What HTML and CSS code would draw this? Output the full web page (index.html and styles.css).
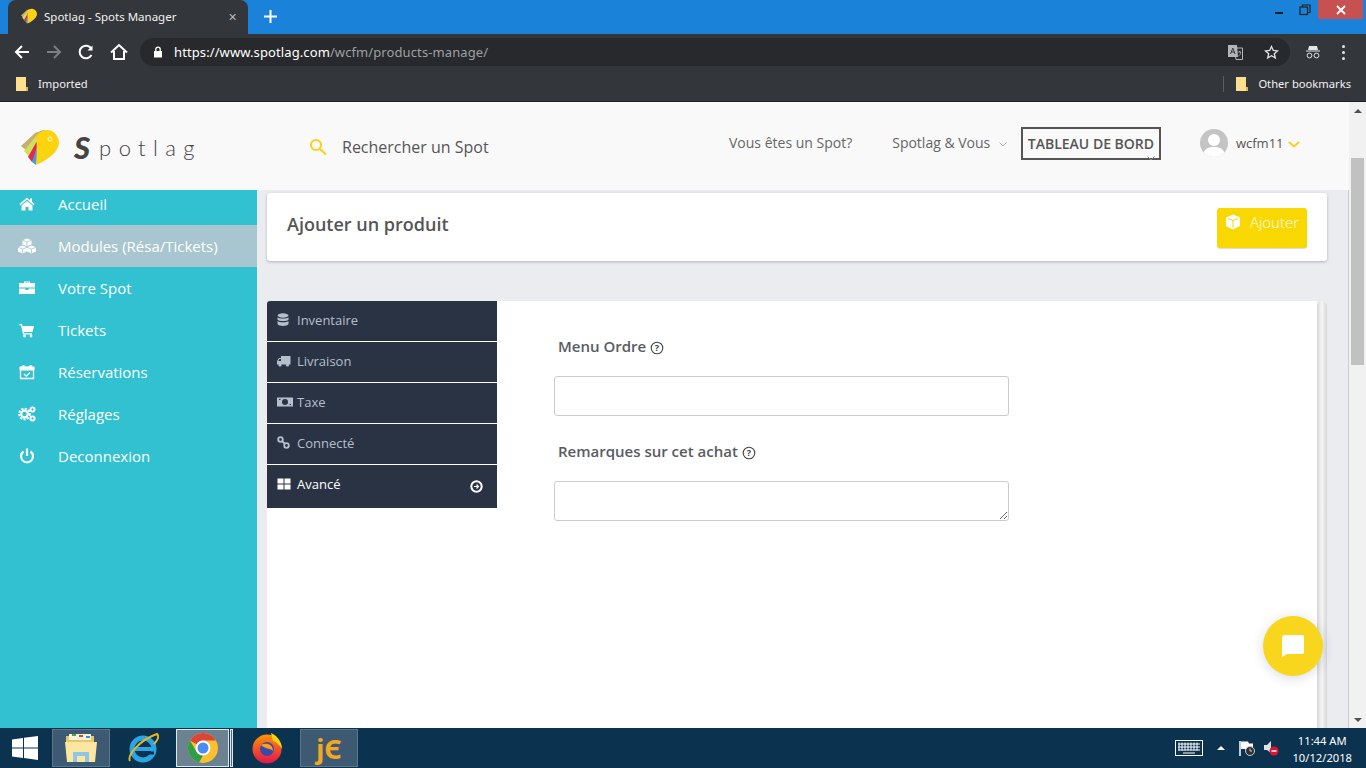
FILE: index.html
```html
<!DOCTYPE html>
<html lang="en">
<head>
  <meta charset="UTF-8">
  <meta name="viewport" content="width=device-width, initial-scale=1.0">
  <title>Spotlag - Spots Manager</title>
  <link rel="stylesheet" href="styles.css">
</head>
<body>
  <div class="browser">
    <div class="tabstrip">
      <div class="tab">
        <svg class="tab-icon" width="16" height="16" viewBox="0 0 38 36"><path d="M0 17 14 4 24 .5 16 10 6 22z" fill="#c9ad6f"/><path d="M3 22 15 7l1 13-8 8z" fill="#cfe05a"/><path d="M7 28 16 12v14l-5 7z" fill="#e8274f"/><path d="M11 33 16 18v12l-1 6z" fill="#3f9fe0"/><path d="M15 7c3-4 8-6.500 12-6 7 1 11 7 11 13 0 8-11 17-23 22 1-9 1-19 0-29z" fill="#fbd40f"/></svg>
        <span class="tab-title">Spotlag - Spots Manager</span>
        <span class="tab-close">✕</span>
      </div>
      <svg class="new-tab" width="13" height="13" viewBox="0 0 13 13"><path d="M6.500 0v13M0 6.500h13" stroke="#fff" stroke-width="2"/></svg>
      <div class="window-btns">
        <svg class="win-min" width="10" height="10" viewBox="0 0 10 10"><path d="M1 8h8" stroke="#222" stroke-width="2"/></svg>
        <svg class="win-restore" width="12" height="12" viewBox="0 0 12 12" fill="none" stroke="#222" stroke-width="1.200"><rect x="1" y="3" width="7.500" height="7.500"/><path d="M3.500 3V1H11v7.500H8.500"/></svg>
        <div class="win-close"><svg width="10" height="10" viewBox="0 0 10 10"><path d="M1 1l8 8M9 1 1 9" stroke="#fff" stroke-width="1.800"/></svg></div>
      </div>
    </div>
    <div class="toolbar">
      <svg class="nav-icon" width="16" height="16" viewBox="0 0 16 16" fill="none" stroke="#fff" stroke-width="2"><path d="M15 8H2M8 2 2 8l6 6"/></svg>
      <svg class="nav-icon" width="16" height="16" viewBox="0 0 16 16" fill="none" stroke="#7d8083" stroke-width="2"><path d="M1 8h13M8 2l6 6-6 6"/></svg>
      <svg class="nav-icon" width="16" height="16" viewBox="0 0 16 16" fill="none" stroke="#fff" stroke-width="2"><path d="M13.500 11a6.300 6.300 0 1 1 0-6"/><path d="M14.500 1.500v5h-5" fill="#fff" stroke="none"/></svg>
      <svg class="nav-icon nav-home" width="18" height="18" viewBox="0 0 18 18" fill="none" stroke="#fff" stroke-width="2"><path d="M1 9.500 9 2l8 7.500M4 8v8h10V8"/></svg>
      <div class="omnibox">
        <svg width="10" height="12" viewBox="0 0 10 12"><path d="M1 5h8v6.500H1z" fill="#fff"/><path d="M2.800 5V3.300a2.200 2.200 0 0 1 4.400 0V5" fill="none" stroke="#fff" stroke-width="1.300"/></svg>
        <span class="url"><span class="url-host">https://www.spotlag.com</span>/wcfm/products-manage/</span>
        <div class="omnibox-right">
          <svg width="15" height="15" viewBox="0 0 15 15"><path d="M6 3h8.500v11.500H8z" fill="none" stroke="#b3b5b7"/><path d="M0 0h9l1 12H0z" fill="#b3b5b7"/><path d="M2.500 9l2.300-6 2.300 6M3.500 7h2.600" fill="none" stroke="#33363a"/><path d="M10 7h3M11.500 6v1M10.500 11c1.500-1 2-2 2.300-4" fill="none" stroke="#b3b5b7" stroke-width=".8"/></svg>
          <svg width="15" height="15" viewBox="0 0 15 15"><path d="m7.500 1.500 1.800 4 4.200.4-3.200 2.800 1 4.300-3.800-2.300-3.800 2.300 1-4.300L1.500 5.900l4.200-.4z" fill="none" stroke="#e3e4e5" stroke-width="1.300"/></svg>
        </div>
      </div>
      <svg class="incognito" width="16" height="14" viewBox="0 0 16 14"><path d="M4 1h8l1 4H3zM1 5.500h14v1H1z" fill="#e3e4e5"/><circle cx="4.500" cy="10.500" r="2.400" fill="none" stroke="#e3e4e5"/><circle cx="11.500" cy="10.500" r="2.400" fill="none" stroke="#e3e4e5"/></svg>
      <div class="dots"><i></i><i></i><i></i></div>
    </div>
    <div class="bookmarks">
      <svg class="folder" width="12" height="14" viewBox="0 0 12 14"><path d="M0 0h10v10h2v4H0z" fill="#fce08f"/><path d="M10 10h2v4h-2z" fill="#e3b84a"/></svg>
      <span>Imported</span>
      <div class="bookmarks-right">
        <span class="bookmarks-sep"></span>
        <svg class="folder" width="12" height="14" viewBox="0 0 12 14"><path d="M0 0h10v10h2v4H0z" fill="#fce08f"/><path d="M10 10h2v4h-2z" fill="#e3b84a"/></svg>
        <span>Other bookmarks</span>
      </div>
    </div>
  </div>

  <div class="page">
    <div class="site">
      <header class="site-header">
        <div class="logo">
          <svg width="38" height="36" viewBox="0 0 38 36"><path d="M0 17 14 4 24 .5 16 10 6 22z" fill="#c9ad6f"/><path d="M3 22 15 7l1 13-8 8z" fill="#cfe05a"/><path d="M7 28 16 12v14l-5 7z" fill="#e8274f"/><path d="M11 33 16 18v12l-1 6z" fill="#3f9fe0"/><path d="M15 7c3-4 8-6.500 12-6 7 1 11 7 11 13 0 8-11 17-23 22 1-9 1-19 0-29z" fill="#fbd40f"/><circle cx="29" cy="10" r="2" fill="none" stroke="#fff" stroke-width=".8"/></svg>
          <span class="logo-s">S</span><span class="logo-rest">potlag</span>
        </div>
        <div class="search">
          <svg width="18" height="18" viewBox="0 0 18 18" fill="none" stroke="#fbd01e" stroke-width="2.200"><circle cx="7" cy="7" r="5"/><path d="m11 11 6 5.500"/></svg>
          <span>Rechercher un Spot</span>
        </div>
        <nav class="top-nav">
          <a class="nav-link">Vous êtes un Spot?</a>
          <a class="nav-link with-caret">Spotlag &amp; Vous <svg width="8" height="5" viewBox="0 0 8 5" fill="none" stroke="#b5b5b5"><path d="m.5.500 3.500 3.500L7.500.500"/></svg></a>
          <a class="board-link">TABLEAU DE BORD<svg class="board-caret" width="8" height="5" viewBox="0 0 8 5" fill="none" stroke="#888"><path d="m.5.500 3.500 3.500L7.500.500"/></svg></a>
        </nav>
        <div class="user">
          <div class="avatar"><svg width="28" height="28" viewBox="0 0 28 28"><circle cx="14" cy="11" r="6" fill="#fff"/><path d="M3 28c0-8 5-10 11-10s11 2 11 10z" fill="#fff"/></svg></div>
          <span>wcfm11</span>
          <svg width="12" height="7" viewBox="0 0 12 7" fill="none" stroke="#fbd01e" stroke-width="2"><path d="m1 1 5 4.500L11 1"/></svg>
        </div>
      </header>
      <div class="body-row">
        <aside class="sidebar">
          <ul class="side-menu">
            <li><svg class="side-icon" viewBox="0 0 18 16"><path d="M9 1.500 1.500 8l1 1.200L9 3.500l6.500 5.700 1-1.200-2.500-2.200V2.500h-2v2zM3.500 9.500 9 5l5.500 4.500v5h-4v-3.500h-3v3.500h-4z" fill="#fff"/></svg>Accueil</li>
            <li class="active"><svg class="side-icon" viewBox="0 0 18 16"><path d="m9 .5 4.500 1.700v4.300L9 8.300 4.500 6.500V2.200zM4.500 7.500 9 9.300v4.300l-4.500 1.900L0 13.600V9.300zM13.500 7.500 18 9.300v4.300l-4.500 1.900L9 13.600V9.300z" fill="#fff"/><path d="M4.500 2.200 9 4l4.500-1.800M9 4v4.300M0 9.300l4.500 1.800L9 9.300M4.500 11.100v4.400M9 9.300l4.500 1.800L18 9.300M13.500 11.100v4.400" fill="none" stroke="#a8c6d0" stroke-width=".8"/></svg>Modules (Résa/Tickets)</li>
            <li><svg class="side-icon" viewBox="0 0 18 16"><path d="M6 3V1.500h6V3h5v4.500H1V3zm1.200 0h3.600V2.500H7.200zM1 8.500h6.500V10h3V8.500H17V14H1z" fill="#fff"/></svg>Votre Spot</li>
            <li><svg class="side-icon" viewBox="0 0 18 16"><path d="M1 2h3l.6 2H16l-1.500 6H6l.3 1.200H14v1.300H5L3 3.300H1z" fill="#fff"/><circle cx="6.500" cy="14" r="1.400" fill="#fff"/><circle cx="13" cy="14" r="1.400" fill="#fff"/></svg>Tickets</li>
            <li><svg class="side-icon" viewBox="0 0 18 16" fill="none" stroke="#fff"><path d="M2.500 3.500h13v11h-13z" stroke-width="1.300"/><path d="M2 3h14v3H2z" fill="#fff"/><path d="M5.500 1v3M12.500 1v3" stroke-width="2"/><path d="m6 10 2.200 2.200L12 8.500" stroke-width="1.300"/></svg>Réservations</li>
            <li><svg class="side-icon" viewBox="0 0 18 16" fill="none" stroke="#fff"><circle cx="6.500" cy="8" r="5.300" stroke-width="2" stroke-dasharray="2.200 1.300"/><circle cx="6.500" cy="8" r="3.300" stroke-width="2.200"/><circle cx="14.500" cy="3.500" r="2.100" stroke-width="1.900"/><circle cx="14.500" cy="12.500" r="2.100" stroke-width="1.900"/></svg>Réglages</li>
            <li><svg class="side-icon" viewBox="0 0 18 16" fill="none" stroke="#fff" stroke-width="2.200"><path d="M5.500 3.500a6 6 0 1 0 7 0M9 .5v7.500"/></svg>Deconnexion</li>
          </ul>
        </aside>
        <main class="main">
          <section class="title-card">
            <h2>Ajouter un produit</h2>
            <button class="add-btn">
              <svg width="16" height="16" viewBox="0 0 16 16"><path d="M8 0.500 15 3.500v8.500L8 15.500 1 12V3.500z" fill="#fff"/><path d="m3 4.500 5 2 5-2M8 6.500v7" stroke="#f8d800" fill="none"/></svg>
              Ajouter
            </button>
          </section>
          <section class="editor">
            <div class="editor-body">
              <ul class="tabs">
                <li><svg class="tab-ic" viewBox="0 0 14 14" fill="#b4bfcb"><ellipse cx="6" cy="2.500" rx="5.500" ry="2.200"/><path d="M.5 4.300c1 1.700 10 1.700 11 0v2.400c-1 1.700-10 1.700-11 0zM.5 8c1 1.700 10 1.700 11 0v3c-1 2.500-10 2.500-11 0z"/></svg>Inventaire</li>
                <li><svg class="tab-ic" viewBox="0 0 14 14" fill="#b4bfcb"><path d="M4 2h9.500v8.500H0V7l2-3h2zM2.500 5 1.200 7H4V5z"/><circle cx="3" cy="11" r="1.600"/><circle cx="10.500" cy="11" r="1.600"/></svg>Livraison</li>
                <li><svg class="tab-ic tab-ic-wide" viewBox="0 0 16 14"><path d="M0 2.500h16v9H0z" fill="#b4bfcb"/><circle cx="8" cy="7" r="3" fill="#2a3344"/><path d="M2 4.500h1.500M12.500 9.500H14" stroke="#2a3344"/></svg>Taxe</li>
                <li><svg class="tab-ic" viewBox="0 0 14 14" fill="none" stroke="#b4bfcb" stroke-width="1.800"><circle cx="3.500" cy="3.500" r="2.300"/><circle cx="9.500" cy="9.500" r="2.300"/><path d="m5 5 3 3"/></svg>Connecté</li>
                <li class="current"><svg class="tab-ic" viewBox="0 0 14 14" fill="#fff"><path d="M.5 1.500h6v5h-6zM7.500 1.500h6v5h-6zM.5 7.500h6v5h-6zM7.500 7.500h6v5h-6z"/></svg>Avancé
                  <svg class="tab-arrow" width="13" height="13" viewBox="0 0 13 13"><circle cx="6.500" cy="6.500" r="5.200" fill="none" stroke="#fff" stroke-width="2"/><path d="M4 6.500h4.500M6.500 4.500l2 2-2 2" fill="none" stroke="#fff" stroke-width="1.200"/></svg>
                </li>
              </ul>
              <form class="fields">
                <div class="field">
                  <label>Menu Ordre <svg class="help" width="14" height="14" viewBox="0 0 14 14"><circle cx="7" cy="7" r="5.800" fill="none" stroke="#444" stroke-width="1.100"/><text x="7" y="10" text-anchor="middle" font-size="9" font-family="Open Sans" font-weight="700" fill="#444">?</text></svg></label>
                  <input type="text">
                </div>
                <div class="field">
                  <label>Remarques sur cet achat <svg class="help" width="14" height="14" viewBox="0 0 14 14"><circle cx="7" cy="7" r="5.800" fill="none" stroke="#444" stroke-width="1.100"/><text x="7" y="10" text-anchor="middle" font-size="9" font-family="Open Sans" font-weight="700" fill="#444">?</text></svg></label>
                  <textarea></textarea>
                </div>
              </form>
            </div>
            <div class="editor-rail"></div>
          </section>
          <div class="chat-bubble">
            <svg width="22" height="22" viewBox="0 0 22 22"><path d="M3 0h17a2 2 0 0 1 2 2v15a2 2 0 0 1-2 2H5l-5 3V3a3 3 0 0 1 3-3z" fill="#fff"/></svg>
          </div>
        </main>
      </div>
    </div>
    <div class="page-scrollbar">
      <span class="arrow-up"></span>
      <div class="thumb"></div>
      <span class="arrow-down"></span>
    </div>
  </div>

  <footer class="taskbar">
    <svg class="win-logo" width="26" height="26" viewBox="0 0 26 26" fill="#fff"><path d="M0 4.500 11 3v9.500H0zM12 2.800 26 1v11.500H12zM0 13.500h11V23L0 21.500zM12 13.500h14V25l-14-2z"/></svg>
    <div class="task-btn">
      <svg width="34" height="32" viewBox="0 0 34 32"><path d="M2 4h28v10H2z" fill="#e8c766"/><path d="M5 2h22v6H5z" fill="#f8f3dc"/><path d="M8 2h4v2H8z" fill="#3cab4a"/><path d="M15 3h4v2h-4z" fill="#d8443a"/><path d="M22 4h4v2h-4z" fill="#3a8fd8"/><path d="M1 10h32l-2 20H3z" fill="#fbe6a2"/><path d="M9 30V20h16v10h-4v-6h-8v6z" fill="#8fc6e8"/></svg>
    </div>
    <div class="task-plain task-ie">
      <svg width="32" height="32" viewBox="0 0 32 32"><circle cx="16" cy="17" r="11" fill="none" stroke="#2aa5e6" stroke-width="5"/><path d="M8 17h17" stroke="#2aa5e6" stroke-width="4"/><path d="M3 29C0 24 12 8 30 2c3 3-1 8-3 10" fill="none" stroke="#e8b520" stroke-width="2"/><path d="M27 21h-8" stroke="#0b3350" stroke-width="3"/></svg>
    </div>
    <div class="task-btn task-active">
      <svg width="30" height="30" viewBox="0 0 30 30"><circle cx="15" cy="15" r="15" fill="#fbc02d"/><path d="M15 0a15 15 0 0 1 13 7.500H15a7.500 7.500 0 0 0-6.500 3.750L2 7.500A15 15 0 0 1 15 0z" fill="#db4437"/><path d="M2 7.500l6.500 11.250A7.500 7.500 0 0 0 15 22.500l-4 7A15 15 0 0 1 2 7.500z" fill="#2e9e48"/><circle cx="15" cy="15" r="7.500" fill="#fff"/><circle cx="15" cy="15" r="5.500" fill="#4c8bf5"/></svg>
    </div>
    <span class="task-sliver"></span>
    <div class="task-plain task-ff">
      <svg width="32" height="32" viewBox="0 0 32 32"><defs><linearGradient id="ff" x1="0" y1="0" x2="0" y2="1"><stop offset="0" stop-color="#ff9500"/><stop offset="1" stop-color="#e3124f"/></linearGradient></defs><circle cx="16" cy="17" r="14.500" fill="url(#ff)"/><path d="M20 1c5 2 11 8 11 16-2-4-6-7-9-8z" fill="#fbd40f"/><circle cx="16" cy="17" r="7" fill="#3b4aa8"/><path d="M10 13c5-3 12-1 12 6-3-3-8-2-12-6z" fill="#ff9f1c"/></svg>
    </div>
    <div class="task-btn task-je"><span>jЄ</span></div>
    <div class="tray">
      <svg class="tray-kb" width="28" height="16" viewBox="0 0 28 16"><rect x=".5" y=".5" width="27" height="15" fill="#0b3350" stroke="#fff"/><path d="M3 4h22M3 7h22M3 10h22M4 2.500v8M7 2.500v8M10 2.500v8M13 2.500v8M16 2.500v8M19 2.500v8M22 2.500v8M8 13h12" stroke="#fff"/></svg>
      <span class="tray-caret"></span>
      <svg class="tray-flag" width="16" height="16" viewBox="0 0 16 16"><path d="M1 1v15" stroke="#fff" stroke-width="1.500"/><path d="M2 1.500h7l1 2h4v7H7l-1-1.500H2z" fill="#fff"/><circle cx="11" cy="11" r="4.500" fill="#333" stroke="#ccc"/><path d="M11 8.500V11h2" fill="none" stroke="#ccc"/></svg>
      <svg class="tray-sound" width="16" height="16" viewBox="0 0 16 16"><path d="M1 5h3l4-4v12L4 10H1z" fill="#dfe3e6"/><circle cx="11" cy="11" r="4.500" fill="#e2142d"/><path d="M8.500 11h5" stroke="#fff" stroke-width="1.500"/></svg>
      <div class="clock"><div>11:44 AM</div><div>10/12/2018</div></div>
    </div>
  </footer>
</body>
</html>
```

FILE: styles.css
```css
* {
  box-sizing: border-box;
}

body {
  margin: 0;
  height: 768px;
  overflow: hidden;
  display: flex;
  flex-direction: column;
  font-family: 'Open Sans', sans-serif;
  background-color: #ebecf0;
}

ul {
  list-style: none;
  margin: 0;
  padding: 0;
}

/* browser window */
.browser {
  flex: none;
  height: 102px;
  border-bottom: 1px solid #1f2124;
  background-color: #33363a;
  font-family: 'Noto Sans', sans-serif;
  color: #fff;
}

.tabstrip {
  height: 34px;
  display: flex;
  align-items: flex-end;
  background-color: #1a82d8;
  position: relative;
}

.tab {
  width: 240px;
  height: 34px;
  margin-left: 8px;
  padding: 0 7px 2px 13px;
  display: flex;
  align-items: center;
  background-color: #33363a;
  border-radius: 8px 8px 0 0;
  font-size: 11.5px;
}

.tab-icon {
  margin-right: 7px;
}

.tab-title {
  flex: 1;
  color: #f2f2f2;
}

.tab-close {
  font-size: 11px;
  color: #b5b7b9;
  margin-right: 4px;
}

.new-tab {
  margin: 0 0 11px 16px;
}

.window-btns {
  margin-left: auto;
  align-self: flex-start;
  height: 19px;
  display: flex;
  align-items: center;
  padding-right: 3px;
}

.win-min {
  margin-right: 15px;
}

.win-restore {
  margin-right: 7px;
}

.win-close {
  width: 45px;
  height: 19px;
  background-color: #c75050;
  display: flex;
  align-items: center;
  justify-content: center;
}

.toolbar {
  height: 32px;
  margin-top: 2px;
  padding-left: 14px;
  display: flex;
  align-items: center;
}

.nav-icon {
  margin-right: 16px;
}

.nav-home {
  margin-right: 12px;
}

.omnibox {
  width: 1150px;
  height: 28px;
  padding: 0 0 0 13px;
  display: flex;
  align-items: center;
  background-color: #27292c;
  border-radius: 14px;
  font-size: 13px;
  letter-spacing: 0.1px;
}

.url {
  margin-left: 11px;
  color: #9da0a3;
}

.url-host {
  color: #fff;
}

.omnibox-right {
  margin-left: auto;
  display: flex;
  gap: 21px;
  padding-right: 11px;
}

.incognito {
  margin-left: 15px;
}

.dots {
  margin-left: 21px;
  display: flex;
  flex-direction: column;
  gap: 3px;
}

.dots i {
  width: 3px;
  height: 3px;
  background-color: #e3e4e5;
  border-radius: 50%;
}

.bookmarks {
  height: 33px;
  padding: 0 15px 2px 16px;
  display: flex;
  align-items: center;
  gap: 10px;
  font-size: 11.2px;
  color: #f2f2f2;
}

.bookmarks-right {
  margin-left: auto;
  display: flex;
  align-items: center;
  gap: 10px;
}

.bookmarks-sep {
  width: 1px;
  height: 16px;
  margin-right: 2px;
  background-color: #5c5f62;
}

/* site */
.page {
  flex: 1;
  min-height: 0;
  display: flex;
}

.site {
  flex: 1;
  min-width: 0;
  display: flex;
  flex-direction: column;
}

.site-header {
  flex: none;
  height: 88px;
  display: flex;
  align-items: center;
  background-color: #f9f9f9;
  color: #666;
}

.logo {
  width: 309px;
  padding: 0 0 0 21px;
  display: flex;
  align-items: center;
  color: #444;
  font-family: Lato, sans-serif;
  margin-top: 2px;
}

.logo-s {
  margin-left: 15px;
  font-size: 31px;
  font-weight: 900;
  font-style: italic;
}

.logo-rest {
  margin-left: 9px;
  font-size: 22px;
  letter-spacing: 7.400px;
  font-weight: 300;
}

.search {
  width: 420px;
  margin-top: 2px;
  display: flex;
  align-items: center;
  gap: 15px;
  font-size: 16px;
  color: #555;
}

.top-nav {
  margin-bottom: 6px;
  display: flex;
  align-items: center;
  font-size: 14px;
  color: #666;
}

.nav-link {
  margin-right: 40px;
  padding-bottom: 2px;
}

.top-nav .with-caret {
  margin-right: 14px;
}

.with-caret svg {
  margin-left: 5px;
  vertical-align: 1px;
}

.board-link {
  width: 140px;
  height: 33px;
  line-height: 29px;
  text-align: center;
  border: 2px solid #555;
  font-weight: 600;
  white-space: nowrap;
  color: #555;
  position: relative;
}

.board-caret {
  position: absolute;
  right: 4px;
  bottom: -3px;
}

.user {
  margin: 0 0 6px 39px;
  display: flex;
  align-items: center;
  font-size: 13px;
  color: #555;
}

.avatar {
  width: 28px;
  height: 28px;
  margin-right: 8px;
  border-radius: 50%;
  overflow: hidden;
  background-color: #c4c4c4;
}

.user > svg {
  margin: 3px 0 0 4px;
}

.body-row {
  flex: 1;
  min-height: 0;
  display: flex;
}

.sidebar {
  flex: none;
  width: 257px;
  overflow: hidden;
  background-color: #31c1d1;
}

.side-menu {
  margin-top: -7px;
}

.side-menu li {
  height: 42px;
  padding-left: 18px;
  display: flex;
  align-items: center;
  font-size: 15px;
  color: #fff;
}

.side-menu .active {
  background-color: #a8c6d0;
}

.side-icon {
  width: 18px;
  height: 16px;
  margin-right: 22px;
}

.main {
  flex: 1;
  min-width: 0;
  position: relative;
  padding: 3px 21px 0 10px;
  border-right: 1px solid #ccc;
  overflow: hidden;
}

.title-card {
  height: 68px;
  padding: 0 20px;
  display: flex;
  align-items: center;
  justify-content: space-between;
  background-color: #fff;
  border-radius: 3px;
  box-shadow: 0 1px 3px rgba(0, 0, 0, 0.25);
}

.title-card h2 {
  margin: 0;
  padding-bottom: 6px;
  font-size: 18px;
  font-weight: 600;
  color: #555;
}

.add-btn {
  width: 90px;
  height: 40px;
  margin-top: 2px;
  padding: 0 0 13px 0;
  display: flex;
  align-items: center;
  justify-content: center;
  gap: 9px;
  border: none;
  border-radius: 3px;
  background-color: #f8d800;
  box-shadow: 0 1px 1px rgba(0, 0, 0, 0.15);
  color: #fff;
  font-family: inherit;
  font-size: 15px;
  font-weight: 300;
}

.editor {
  height: 500px;
  margin-top: 40px;
  display: flex;
}

.editor-body {
  flex: 1;
  display: flex;
  background-color: #fff;
  border-radius: 3px 0 0 0;
}

.editor-rail {
  flex: none;
  width: 10px;
  background: linear-gradient(to right, #d6d6d6, #f6f6f6 50%, #d6d6d6);
  border-radius: 5px 5px 0 0;
}

.tabs {
  flex: none;
  width: 230px;
  align-self: flex-start;
}

.tabs li {
  height: 41px;
  padding: 0 14px 3px 10px;
  display: flex;
  align-items: center;
  background-color: #2a3344;
  border-bottom: 1px solid #fff;
  font-size: 13px;
  color: #b4bfcb;
}

.tabs li:first-child {
  border-top-left-radius: 3px;
}

.tabs .current {
  height: 43px;
  padding-bottom: 5px;
  color: #fff;
  border-bottom: none;
}

.tab-ic {
  width: 14px;
  height: 14px;
  margin-right: 6px;
}

.tab-ic-wide {
  width: 16px;
  margin-right: 4px;
}

.tab-arrow {
  margin: 5px 0 0 auto;
}

.fields {
  padding: 36px 0 0 57px;
  width: 512px;
}

.field {
  margin-bottom: 26px;
}

.field label {
  display: block;
  height: 39px;
  padding-left: 4px;
  font-size: 15px;
  line-height: 18px;
  font-weight: 600;
  color: #585c62;
}

.help {
  vertical-align: -3px;
}

.field input,
.field textarea {
  display: block;
  width: 455px;
  height: 40px;
  margin: 0;
  background-color: #fff;
  border: 1px solid #ccc;
  border-radius: 3px;
}

.chat-bubble {
  position: absolute;
  right: 25px;
  top: 426px;
  width: 60px;
  height: 60px;
  border-radius: 50%;
  display: flex;
  align-items: center;
  justify-content: center;
  background-color: #f8d61e;
  box-shadow: 0 2px 12px rgba(60, 70, 130, 0.2);
}

.page-scrollbar {
  flex: none;
  width: 17px;
  display: flex;
  flex-direction: column;
  align-items: center;
  background-color: #f1f1f1;
  position: relative;
}

.arrow-up {
  margin-top: 7px;
  border: 4px solid transparent;
  border-top: none;
  border-bottom: 4px solid #505050;
}

.thumb {
  width: 13px;
  height: 207px;
  margin-top: 45px;
  background-color: #c1c1c1;
}

.arrow-down {
  position: absolute;
  bottom: 6px;
  border: 4px solid transparent;
  border-bottom: none;
  border-top: 4px solid #505050;
}

/* windows taskbar */
.taskbar {
  flex: none;
  height: 40px;
  padding-left: 12px;
  display: flex;
  align-items: center;
  background-color: #0b3350;
  color: #fff;
  font-family: 'Noto Sans', sans-serif;
}

.win-logo {
  margin-right: 14px;
}

.task-btn,
.task-plain {
  width: 58px;
  height: 38px;
  display: flex;
  align-items: center;
  justify-content: center;
}

.task-btn {
  background-color: #3d5a72;
  border: 1px solid #5c7689;
}

.task-ie {
  width: 66px;
}

.task-active {
  width: 53px;
  background-color: #6d8290;
  border: 1px solid #e4e8ea;
}

.task-sliver {
  width: 3px;
  height: 38px;
  margin-left: 1px;
  background-color: #4d6a80;
  border: 1px solid #e4e8ea;
}

.task-ff {
  width: 67px;
}

.task-je {
  color: #f5a623;
  font-size: 27px;
  font-weight: 700;
}

.tray {
  margin-left: auto;
  padding-right: 14px;
  display: flex;
  align-items: center;
}

.tray-caret {
  margin: 0 14px;
  border: 4px solid transparent;
  border-top: none;
  border-bottom: 4px solid #fff;
}

.tray-flag {
  margin-right: 8px;
}

.clock {
  margin: 2px 0 0 13px;
  text-align: center;
  font-size: 11.2px;
  line-height: 17px;
}
```
